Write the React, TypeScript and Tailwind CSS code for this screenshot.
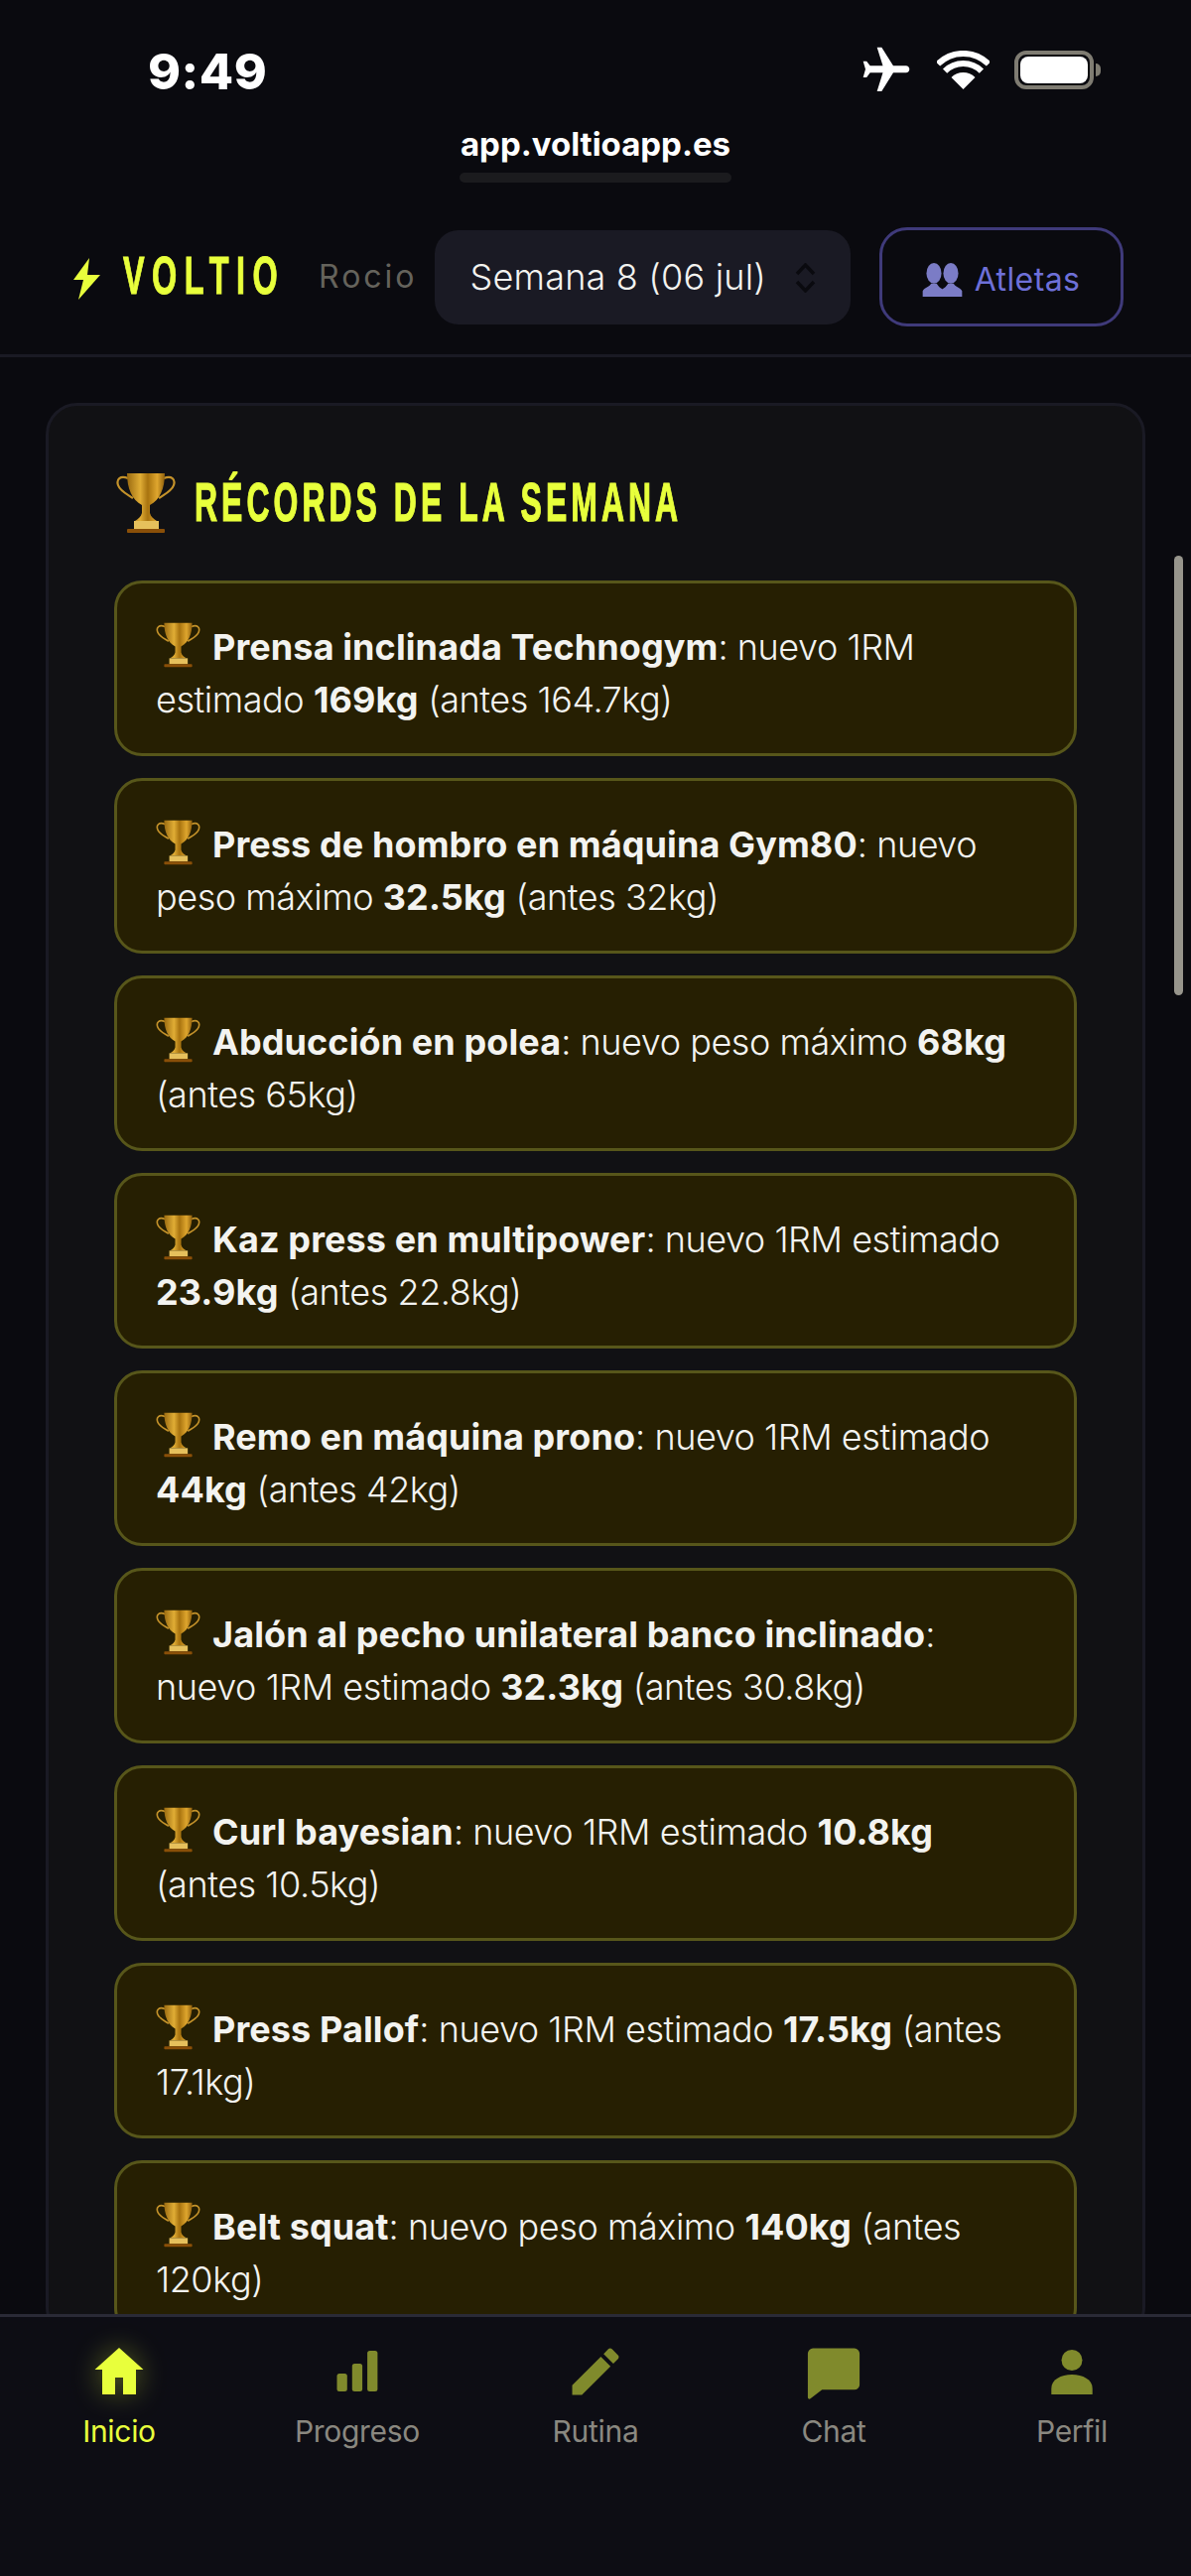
import React from 'react';
import { MdFlight } from 'react-icons/md';

const Trophy: React.FC<{ className: string }> = ({ className }) => (
    <svg viewBox="0 0 60 62" className={className}>
        <defs>
            <linearGradient id="cup" x1="0" x2="1" y1="0" y2="0">
                <stop offset="0" stopColor="#9a6a10" />
                <stop offset="0.35" stopColor="#e0ad35" />
                <stop offset="0.55" stopColor="#a8730f" />
                <stop offset="0.8" stopColor="#dfa62e" />
                <stop offset="1" stopColor="#8f5f0c" />
            </linearGradient>
        </defs>
        <path d="M12 6 C4 3 0 7 2 13 C4 19 11 22 17 26" fill="none" stroke="#c4922a" strokeWidth="2.2" />
        <path d="M48 6 C56 3 60 7 58 13 C56 19 49 22 43 26" fill="none" stroke="#c4922a" strokeWidth="2.2" />
        <path d="M11 1 H49 C49 16 44 28 34 33 V41 C35 45 38 47 41 49 H19 C22 47 25 45 26 41 V33 C16 28 11 16 11 1 Z" fill="url(#cup)" />
        <rect x="18" y="49" width="25" height="8" fill="#e6c05c" />
        <rect x="11" y="57" width="38" height="4" rx="1" fill="#8a4f08" />
    </svg>
);

const Bust: React.FC = () => (
    <svg viewBox="0 0 42 36" className="w-[41px] h-[34px]">
        <g fill="#7b7cc6">
            <ellipse cx="12" cy="11" rx="8" ry="11" />
            <ellipse cx="30" cy="11" rx="8" ry="11" />
            <path d="M0 36 V30 C2 26 7 26 9 22 H15 C17 26 20 27 21 28 C22 27 25 26 27 22 H33 C35 26 40 26 42 30 V36 Z" />
        </g>
    </svg>
);

const B: React.FC<{ children: React.ReactNode }> = ({ children }) => (
    <b className="tracking-[0.1px]">{children}</b>
);

const Record: React.FC<{ children: React.ReactNode }> = ({ children }) => (
    <div className="h-[177px] rounded-[28px] border-[3px] border-[#57561a] bg-[#261f02] pl-[39px] pt-[38px] text-[36px] leading-[53px] tracking-[-0.45px] font-[350] text-[#f3f3f0] whitespace-nowrap">
        <Trophy className="inline-block w-[45px] h-[46px] mr-[12px] align-[-8px]" />
        {children}
    </div>
);

const items = [
    { label: 'Inicio', active: true },
    { label: 'Progreso' },
    { label: 'Rutina' },
    { label: 'Chat' },
    { label: 'Perfil' },
];

const NavIcon: React.FC<{ index: number }> = ({ index }) => {
    if (index === 0) {
        return (
            <svg viewBox="0 0 60 60" className="w-[60px] h-[60px] [filter:drop-shadow(0_0_14px_rgba(232,255,60,0.35))]">
                <path d="M30 2 L54.5 24 H47 V49 H34 V32 H26 V49 H13 V24 H5.5 Z" fill="#e8ff3c" />
            </svg>
        );
    }
    if (index === 1) {
        return (
            <svg viewBox="0 0 60 60" className="w-[60px] h-[60px]" fill="#808a2c">
                <rect x="9.5" y="28" width="10.3" height="18" rx="2.5" />
                <rect x="24.8" y="18" width="10.3" height="28" rx="2.5" />
                <rect x="40.1" y="5" width="10.3" height="41" rx="2.5" />
            </svg>
        );
    }
    if (index === 2) {
        return (
            <svg viewBox="0.5 2 23 23" className="w-[60px] h-[60px]" fill="#808a2c">
                <path d="M3 17.25V21h3.75L17.81 9.94l-3.75-3.75L3 17.25zM20.71 7.04c.39-.39.39-1.02 0-1.41l-2.34-2.34c-.39-.39-1.02-.39-1.41 0l-1.83 1.83 3.75 3.75 1.83-1.83z" />
            </svg>
        );
    }
    if (index === 3) {
        return (
            <svg viewBox="0.5 1 23 23" className="w-[60px] h-[60px]" fill="#808a2c">
                <path d="M4 2H20a2 2 0 0 1 2 2V16a2 2 0 0 1-2 2H7.5L3 21.4a.6.6 0 0 1-1-.4V4a2 2 0 0 1 2-2Z" />
            </svg>
        );
    }
    return (
        <svg viewBox="0 0 60 60" className="w-[60px] h-[60px]" fill="#808a2c">
            <circle cx="30" cy="14.5" r="10.5" />
            <path d="M9.3 49V43C9.3 34 19 29 30 29C41 29 50.7 34 50.7 43V49Z" />
        </svg>
    );
};

export default function App() {
    return (
        <div className="w-[1200px] h-[2596px] relative overflow-hidden flex flex-col bg-[#0a0a0f] font-['Inter','Liberation_Sans',sans-serif]">
            {/* status bar */}
            <div className="h-[126px] flex justify-between items-start pt-[44px] pl-[149px] pr-[91px] text-white">
                <span className="text-[50px] leading-[56px] font-extrabold tracking-[0.5px]">9:49</span>
                <div className="flex items-start">
                    <MdFlight className="w-[56px] h-[56px] rotate-90 -mt-[1px] -ml-[4px]" />
                    <svg viewBox="0 0 53 39" className="w-[53px] h-[39px] ml-[23px] mt-[7px]" fill="none" stroke="#fff" strokeWidth="6">
                        <path d="M1 13.5 A36 36 0 0 1 52 13.5" />
                        <path d="M8.1 20.6 A26 26 0 0 1 44.9 20.6" />
                        <path d="M26.5 39 L14.5 27 A17 17 0 0 1 38.5 27 Z" fill="#fff" stroke="none" />
                    </svg>
                    <div className="ml-[25px] mt-[7px] w-[80px] h-[39px] rounded-[12px] border-[4px] border-[#7f7c72] p-[2px]">
                        <div className="w-full h-full rounded-[8px] bg-white" />
                    </div>
                    <div className="ml-[2px] mt-[20px] w-[5px] h-[13px] rounded-r-full bg-[#7f7c72]" />
                </div>
            </div>

            {/* url */}
            <div className="h-[103px] flex flex-col items-center">
                <span className="text-[33px] leading-[38px] font-bold text-white tracking-[0px]">app.voltioapp.es</span>
                <div className="w-[274px] h-[10px] mt-[10px] rounded-full bg-[#1b1b1e]" />
            </div>

            {/* header */}
            <header className="h-[131px] border-b-[3px] border-[#1a1a24] flex items-start pl-[74px]">
                <svg viewBox="0 0 28 42" className="w-[28px] h-[42px] mt-[31px]">
                    <path d="M16 0 L0 22 H10 L5 42 L27 17 H14 Z" fill="#e8ff3c" />
                </svg>
                <div className="ml-[22px] mt-[18px] w-[153px]">
                    <span className="inline-block origin-left scale-x-[0.6] text-[54px] leading-[60px] font-bold tracking-[12.5px] text-[#e8ff3c] whitespace-nowrap font-['Liberation_Sans',sans-serif] [-webkit-text-stroke:1px_#e8ff3c]">VOLTIO</span>
                </div>
                <span className="ml-[44px] mt-[30px] text-[32px] leading-[40px] tracking-[3px] text-[#65635c]">Rocio</span>
                <div className="ml-[17px] mt-[3px] w-[419px] h-[95px] rounded-[24px] bg-[#1a1a24] flex items-center pl-[36px] pr-[35px] justify-between text-[#f3f3f0] text-[36px] font-[350]">
                    <span className="tracking-[0.2px] -mt-[2px]">Semana 8 (06 jul)</span>
                    <svg viewBox="0 0 21 30" className="w-[21px] h-[30px]" fill="none" stroke="#0a0a0f" strokeWidth="3.5">
                        <path d="M2 11 L10.5 2 L19 11" />
                        <path d="M2 19 L10.5 28 L19 19" />
                    </svg>
                </div>
                <button className="ml-[29px] w-[246px] h-[100px] rounded-[28px] border-[3px] border-[#3f3a7a] flex items-center justify-center gap-[12px] pt-[6px] text-[32px] text-[#6e70d8]">
                    <Bust />
                    <span className="tracking-[0.4px]">Atletas</span>
                </button>
            </header>

            {/* contenido */}
            <main className="flex-1 min-h-0 overflow-hidden px-[46px] pt-[46px]">
                <section className="rounded-[32px] border-[3px] border-[#1a1a24] bg-[#111114] px-[66px] pt-[67px]">
                    <h2 className="flex items-start h-[109px] text-[#e8ff3c]">
                        <Trophy className="w-[60px] h-[62px] shrink-0 ml-[2px]" />
                        <span className="ml-[19px] mt-[-1px] inline-block origin-left scale-x-[0.58] text-[55px] leading-[62px] font-bold tracking-[7px] whitespace-nowrap font-['Liberation_Sans',sans-serif] [-webkit-text-stroke:1.2px_#e8ff3c]">RÉCORDS DE LA SEMANA</span>
                    </h2>
                    <div className="flex flex-col gap-[22px]">
                        <Record><B>Prensa inclinada Technogym</B>: nuevo 1RM<br />estimado <B>169kg</B> (antes 164.7kg)</Record>
                        <Record><B>Press de hombro en máquina Gym80</B>: nuevo<br />peso máximo <B>32.5kg</B> (antes 32kg)</Record>
                        <Record><B>Abducción en polea</B>: nuevo peso máximo <B>68kg</B><br />(antes 65kg)</Record>
                        <Record><B>Kaz press en multipower</B>: nuevo 1RM estimado<br /><B>23.9kg</B> (antes 22.8kg)</Record>
                        <Record><B>Remo en máquina prono</B>: nuevo 1RM estimado<br /><B>44kg</B> (antes 42kg)</Record>
                        <Record><B>Jalón al pecho unilateral banco inclinado</B>:<br />nuevo 1RM estimado <B>32.3kg</B> (antes 30.8kg)</Record>
                        <Record><B>Curl bayesian</B>: nuevo 1RM estimado <B>10.8kg</B><br />(antes 10.5kg)</Record>
                        <Record><B>Press Pallof</B>: nuevo 1RM estimado <B>17.5kg</B> (antes<br />17.1kg)</Record>
                        <Record><B>Belt squat</B>: nuevo peso máximo <B>140kg</B> (antes<br />120kg)</Record>
                    </div>
                </section>
            </main>

            {/* scrollbar */}
            <div className="absolute left-[1183px] top-[560px] w-[9px] h-[443px] rounded-full bg-[#97958c]" />

            {/* nav inferior */}
            <nav className="h-[264px] shrink-0 border-t-[3px] border-[#2a2a36] bg-[#0d0d14] grid grid-cols-5 pt-[29px]">
                {items.map((item, i) => (
                    <div key={item.label} className="flex flex-col items-center">
                        <NavIcon index={i} />
                        <span className={`mt-[6px] text-[30px] leading-[40px] tracking-[-0.3px] ${item.active ? 'text-[#e8ff3c]' : 'text-[#8a8880]'}`}>{item.label}</span>
                    </div>
                ))}
            </nav>
        </div>
    );
}
